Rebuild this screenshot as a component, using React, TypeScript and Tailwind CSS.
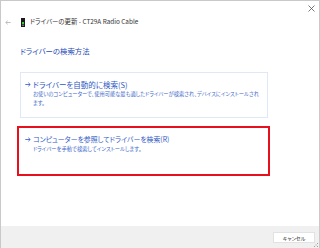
const jp = "font-['Noto_Sans_CJK_JP','Noto_Sans',sans-serif] [font-feature-settings:'palt']";

function Arrow({ className }: { className?: string }) {
  return (
    <svg width="6" height="5" viewBox="0 0 6 5" className={className}>
      <path d="M0.3 2.5H5.2M3.3 0.7L5.2 2.5L3.3 4.3" stroke="currentColor" strokeWidth="0.8" fill="none" />
    </svg>
  );
}

export default function App() {
  return (
    <div className={`w-[320px] h-[248px] flex flex-col bg-white border-l border-t border-r border-[#c9c9c9] ${jp}`}>
      {/* title bar */}
      <div className="h-[15px] flex justify-end items-center pr-[4px]">
        <svg width="7" height="7" viewBox="0 0 7 7">
          <path d="M0.5 0.5L6.5 6.5M6.5 0.5L0.5 6.5" stroke="#555" strokeWidth="0.8" />
        </svg>
      </div>
      <div className="h-[13px] flex items-center">
        <svg width="6" height="5" viewBox="0 0 6 5" className="ml-[4px] text-[#b0b0b0]">
          <path d="M5.7 2.5H0.8M2.7 0.7L0.8 2.5L2.7 4.3" stroke="currentColor" strokeWidth="0.8" fill="none" />
        </svg>
        <svg width="4" height="9" viewBox="0 0 4 9" className="ml-[10px]">
          <rect x="0" y="0" width="4" height="9" fill="#1a1a1a" />
          <rect x="1" y="4" width="2" height="2" fill="#3ccb3c" />
          <rect x="1" y="6.5" width="2" height="1.5" fill="#6a6a6a" />
        </svg>
        <span className="ml-[5px] text-[6.4px] leading-none text-[#333] whitespace-nowrap">ドライバーの更新 - CT29A Radio Cable</span>
      </div>

      <h1 className="ml-[19px] mt-[18px] text-[7.4px] leading-[8px] text-[#2549b4]">ドライバーの検索方法</h1>

      <div className="ml-[19px] mt-[17px] w-[248px] h-[46px] border border-[#dfe8f6] pt-[7px] pl-[4px]">
        <div className="flex items-center gap-[2px] text-[#3058c4]">
          <Arrow />
          <span className="text-[7.5px] leading-[9px]">ドライバーを自動的に検索(S)</span>
        </div>
        <p className="ml-[8px] mt-[1px] text-[5.25px] leading-[8.5px] text-[#4169c9] whitespace-nowrap">
          お使いのコンピューターで、使用可能な最も適したドライバーが検索され、デバイスにインストールされ
          <br />
          ます。
        </p>
      </div>

      <div className="ml-[16px] mt-[8px] w-[253px] h-[50px] border-2 border-[#e8101c] pt-[7px] pl-[6px]">
        <div className="flex items-center gap-[2px] text-[#3058c4]">
          <Arrow />
          <span className="text-[6.9px] leading-[9px]">コンピューターを参照してドライバーを検索(R)</span>
        </div>
        <p className="ml-[8px] mt-[1px] text-[5.3px] leading-[8.5px] text-[#4169c9]">
          ドライバーを手動で検索してインストールします。
        </p>
      </div>

      <div className="flex-1" />

      <div className="h-[22px] bg-[#f0f0f0] flex justify-end items-center pr-[4px] relative">
        <button className="w-[42px] h-[11px] bg-white border border-[#e2e2e2] flex items-center justify-center text-[5px] leading-none text-[#333]">
          キャンセル
        </button>
        <svg width="4" height="4" viewBox="0 0 4 4" className="absolute right-[1px] bottom-[1px]">
          <rect x="3" y="0" width="1" height="1" fill="#a0a0a0" />
          <rect x="3" y="3" width="1" height="1" fill="#a0a0a0" />
          <rect x="0" y="3" width="1" height="1" fill="#a0a0a0" />
          <rect x="1.5" y="1.5" width="1" height="1" fill="#a0a0a0" />
        </svg>
      </div>
    </div>
  );
}
